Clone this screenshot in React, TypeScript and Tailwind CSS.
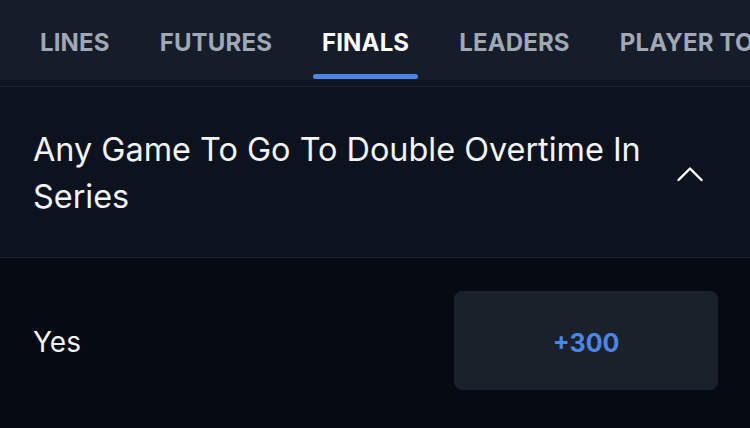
const tabs = ["Lines", "Futures", "Finals", "Leaders", "Player Totals"];
const active = "Finals";

export default function App() {
  return (
    <div className="w-[750px] h-[428px] overflow-hidden bg-[#050a13] font-['Inter',sans-serif]">
      {/* Tab strip */}
      <nav className="h-[80px] bg-[#151c2a] flex items-stretch gap-[32px] pl-[31px] whitespace-nowrap overflow-hidden">
        {tabs.map((tab) => (
          <div key={tab} className="relative flex items-center px-[9px] pt-[5px]">
            <span
              className={
                "text-[24px] font-bold uppercase tracking-[0.15px] " +
                (tab === active ? "text-white" : "text-[#a1a8b5]")
              }
            >
              {tab}
            </span>
            {tab === active && (
              <span className="absolute left-0 right-0 bottom-[1px] h-[5px] rounded-full bg-[#4a86e8]" />
            )}
          </div>
        ))}
      </nav>
      <div className="h-[6px] bg-[#0f1520] border-b border-[#1e2631] box-content" />

      {/* Market header */}
      <section className="h-[171px] bg-[#0d131e] border-b border-[#1b232e] flex items-center justify-between pl-[33px] pr-[47px]">
        <h2 className="text-[32.4px] leading-[47px] text-[#f3f4f6] w-[620px] pt-[2px]">
          Any Game To Go To Double Overtime In Series
        </h2>
        <svg width="26" height="16" viewBox="0 0 26 16" fill="none" className="mt-[4px]">
          <polyline
            points="1.5,14 13,2.5 24.5,14"
            stroke="white"
            strokeWidth="2.4"
            strokeLinecap="round"
            strokeLinejoin="round"
          />
        </svg>
      </section>

      {/* Outcome row */}
      <div className="flex items-center justify-between pl-[33px] pr-[32px] pt-[33px]">
        <span className="text-[28px] text-[#f3f4f6] pt-[3px]">Yes</span>
        <button className="w-[264px] h-[99px] rounded-[8px] bg-[#1b212b] text-[25px] font-bold text-[#4a86e8] pt-[6px]">
          +300
        </button>
      </div>
    </div>
  );
}
